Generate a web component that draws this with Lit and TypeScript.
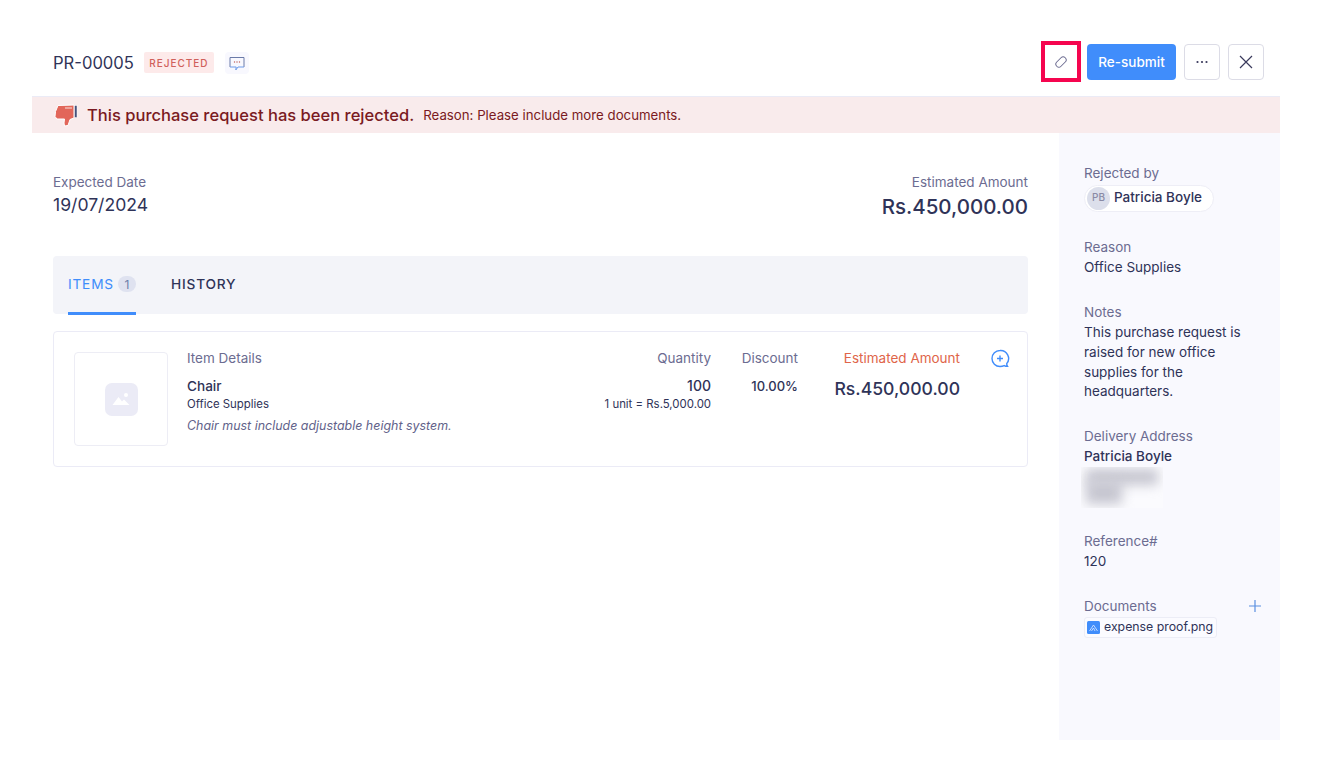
import { LitElement, html, css } from "lit";
import { customElement } from "lit/decorators.js";

@customElement("app-root")
export class AppRoot extends LitElement {
  static styles = css`
    :host { display: block; width: 1320px; height: 772px; background: #fff; font-family: Inter, "Liberation Sans", sans-serif; font-size: 14px; color: #21263c; overflow: hidden; }
    * { box-sizing: border-box; }
    .page { padding: 44px 40px 32px 32px; height: 772px; }
    .panel { height: 696px; display: flex; flex-direction: column; }
    .head { height: 53px; display: flex; align-items: flex-start; justify-content: space-between; padding-left: 21px; border-bottom: 1px solid #ebebf6; flex: none; }
    .title { display: flex; align-items: center; height: 37px; }
    .pr { font-size: 16.6px; font-weight: 400; color: #2f3358; line-height: 36px; }
    .badge { margin-left: 10px; height: 21px; width: 70px; background: #fdeaea; border-radius: 2px; color: #d0605a; font-size: 10px; font-weight: 500; letter-spacing: 1px; display: flex; align-items: center; justify-content: center; }
    .cmt { margin-left: 11px; width: 24px; height: 22px; background: #f8f8fe; border-radius: 4px; display: flex; align-items: center; justify-content: center; }
    .actions { display: flex; align-items: center; gap: 8px; height: 36px; padding-right: 16px; }
    .edit { width: 40px; height: 41px; border: 4px solid #f5054f; display: flex; align-items: center; justify-content: center; margin-right: -2px; margin-top: -1px; background: #fff; }
    .primary { width: 89px; height: 36px; border-radius: 4px; background: #408dfb; color: #fff; font-size: 13.5px; font-weight: 500; display: flex; align-items: center; justify-content: center; }
    .sq { width: 36px; height: 36px; border: 1px solid #dcdce6; border-radius: 4px; background: #fff; display: flex; align-items: center; justify-content: center; }
    .alert { flex: none; height: 36px; background: #f9ebec; display: flex; align-items: center; padding-left: 22px; color: #7a1a22; }
    .alert svg { margin-right: 9px; flex: none; }
    .alert b { font-size: 16.55px; font-weight: 500; line-height: 36px; }
    .alert span { font-size: 13.25px; margin-left: 9px; }
    .body { flex: 1; display: flex; min-height: 0; }
    .main { flex: 1; padding: 40px 31px 0 21px; }
    .aside { width: 221px; background: #f9f9fe; padding: 31px 18px 0 25px; font-size: 13.5px; line-height: 19.6px; }
    .sums { display: flex; justify-content: space-between; height: 83px; }
    .lab { color: #6c6c91; font-size: 13.5px; line-height: 18px; }
    .date { font-size: 17.6px; line-height: 27px; color: #2f3358; }
    .right { text-align: right; }
    .big { font-size: 20.5px; font-weight: 500; line-height: 32px; color: #2f3358; }
    .tabs { height: 58px; width: 975px; background: #f3f4f9; border-radius: 4px; display: flex; padding-left: 15px; gap: 35px; font-size: 13.7px; letter-spacing: .8px; font-weight: 500; }
    .tab { height: 59px; display: flex; align-items: center; gap: 4px; color: #2f3358; padding-bottom: 3px; }
    .tab.on { color: #408dfb; border-bottom: 3px solid #408dfb; font-weight: 400; width: 68px; padding-bottom: 0; }
    .count { width: 18px; height: 16px; border-radius: 8px; background: #dfe2f0; color: #6c7ea8; font-size: 12px; letter-spacing: 0; display: flex; align-items: center; justify-content: center; font-weight: 400; }
    .card { margin-top: 17px; width: 975px; height: 136px; border: 1px solid #ebebf6; border-radius: 4px; padding: 20px 17px 0 20px; display: flex; }
    .thumb { width: 94px; height: 94px; border: 1px solid #ededf5; border-radius: 4px; display: flex; align-items: center; justify-content: center; flex: none; }
    .ph { width: 33px; height: 33px; background: #ebebf6; border-radius: 7px; display: flex; align-items: center; justify-content: center; }
    .details { margin-left: 19px; width: 344px; }
    .th { color: #6c6c91; font-size: 13.5px; line-height: 13px; }
    .name { margin-top: 12px; font-size: 13.6px; font-weight: 500; line-height: 18px; color: #2f3358; }
    .cat { font-size: 11.4px; line-height: 18px; color: #2f3358; }
    .note { margin-top: 4px; font-size: 12.45px; font-style: italic; color: #62628a; line-height: 18px; }
    .qty { width: 184px; text-align: right; flex: none; }
    .v { margin-top: 12px; font-size: 14px; font-weight: 500; line-height: 18px; color: #2f3358; }
    .disc .v { font-size: 13px; }
    .sub { font-size: 11.4px; line-height: 18px; color: #2f3358; }
    .disc { width: 87px; text-align: right; flex: none; }
    .amt { width: 162px; text-align: right; flex: none; }
    .amt .th { color: #e0654a; }
    .big2 { margin-top: 12px; font-size: 17.6px; font-weight: 500; line-height: 24px; color: #2f3358; }
    .plus { margin-left: 30px; margin-top: -3px; flex: none; }
    .f { margin-bottom: 25px; }
    .f.first { margin-bottom: 26px; }
    .f.tight { margin-bottom: 24px; }
    .k { color: #6c6c91; }
    .vv { color: #2f3358; margin-top: 1px; }
    .f.ref .vv { margin-top: 0; }
    .f.ref { margin-bottom: 26px; }
    .chip { display: inline-flex; align-items: center; height: 27px; margin-top: 1px; border-radius: 14px; background: #fff; border: 1px solid #eeeef6; padding-right: 11px; font-weight: 500; font-size: 13.5px; color: #2f3358; }
    .av { width: 23px; height: 23px; border-radius: 50%; background: #dcdfeb; color: #8a8aa5; font-size: 10px; font-weight: 500; display: flex; align-items: center; justify-content: center; margin: 0 4px 0 2px; box-shadow: 0 0 0 1px #fff; }
    .strong { font-weight: 500; color: #2f3358; margin-top: 1px; }
    .blur { width: 82px; height: 41px; margin: 0 0 0 -3px; position: relative; overflow: hidden; background: #fbfbfe; }
    .blur i { position: absolute; background: #c6c6d0; filter: blur(6px); }
    .blur .b1 { left: 5px; top: 2px; width: 72px; height: 16px; }
    .blur .b2 { left: 5px; top: 14px; width: 36px; height: 23px; }
    .dochead { display: flex; justify-content: space-between; align-items: center; width: 177px; }
    .dochead svg { margin-bottom: 1px; }
    .doc { display: inline-flex; align-items: center; gap: 4px; height: 21px; border: 1px solid #ecedf6; border-radius: 3px; padding: 0 3px 0 2px; background: #fbfbff; font-size: 12.3px; color: #2f3358; }
  `;

  render() {
    return html`<div class="page"><div class="panel">
      <div class="head">
        <div class="title">
          <span class="pr">PR-00005</span>
          <span class="badge">REJECTED</span>
          <span class="cmt"><svg width="16" height="16" viewBox="0 0 16 16" fill="none"><path d="M1 12V2.500h14V12" stroke="#6a7aa8" stroke-width="1"/><path d="M1 12h6.200L6.800 15 9 12h6" stroke="#6d9ae8" stroke-width="1"/><circle cx="5.500" cy="7" r=".7" fill="#c0605a"/><circle cx="8" cy="7" r=".7" fill="#c0605a"/><circle cx="10.500" cy="7" r=".7" fill="#c0605a"/></svg></span>
        </div>
        <div class="actions">
          <span class="edit"><svg width="14" height="14" viewBox="0 0 14 14" fill="none"><rect x="1" y="4" width="12" height="6" rx="3" transform="rotate(-45 7 7)" stroke="#6c6c91" stroke-width="1"/></svg></span>
          <span class="primary">Re-submit</span>
          <span class="sq"><svg width="14" height="4" viewBox="0 0 14 4"><circle cx="2.500" cy="2" r="1.100" fill="#3a3a5c"/><circle cx="7" cy="2" r="1.100" fill="#3a3a5c"/><circle cx="11.500" cy="2" r="1.100" fill="#3a3a5c"/></svg></span>
          <span class="sq"><svg width="14" height="14" viewBox="0 0 14 14"><path d="M1 1l12 12M13 1 1 13" stroke="#3a3a5c" stroke-width="1.200"/></svg></span>
        </div>
      </div>
      <div class="alert">
        <svg width="24" height="24" viewBox="0 0 24 24"><path d="M4 2.500 20 2v13l-4 1.500-2 6-3.500.500-.5-3 .5-4H3l-2-2.500.5-5z" fill="#e2665a" stroke="#fff" stroke-width="1"/><rect x="20.500" y="2.500" width="2.500" height="12" fill="#46507a" stroke="#fff" stroke-width=".5"/><path d="M11 5h7" stroke="#f6cfc9" stroke-width="1.200"/></svg>
        <b>This purchase request has been rejected.</b><span>Reason: Please include more documents.</span>
      </div>
      <div class="body">
        <div class="main">
          <div class="sums">
            <div><div class="lab">Expected Date</div><div class="date">19/07/2024</div></div>
            <div class="right"><div class="lab">Estimated Amount</div><div class="big">Rs.450,000.00</div></div>
          </div>
          <div class="tabs">
            <div class="tab on">ITEMS <span class="count">1</span></div>
            <div class="tab">HISTORY</div>
          </div>
          <div class="card">
            <div class="thumb"><div class="ph"><svg width="20" height="20" viewBox="0 0 20 20"><path d="M1.500 16 7.500 8l3.500 4.500 2-2 5.500 5.500z" fill="#fff"/><circle cx="15" cy="6" r="2" fill="#fff"/></svg></div></div>
            <div class="details">
              <div class="th">Item Details</div>
              <div class="name">Chair</div>
              <div class="cat">Office Supplies</div>
              <div class="note">Chair must include adjustable height system.</div>
            </div>
            <div class="qty">
              <div class="th">Quantity</div>
              <div class="v">100</div>
              <div class="sub">1 unit = Rs.5,000.00</div>
            </div>
            <div class="disc">
              <div class="th">Discount</div>
              <div class="v">10.00%</div>
            </div>
            <div class="amt">
              <div class="th">Estimated Amount</div>
              <div class="big2">Rs.450,000.00</div>
            </div>
            <svg class="plus" width="20" height="20" viewBox="0 0 20 20" fill="none"><path d="M10 1.500a8 8 0 1 0 0 16c1.300 0 3-.3 4.200-.9.900.500 2 .8 3.300.8-.5-.7-.8-1.700-.8-2.800A8 8 0 0 0 10 1.500z" stroke="#408dfb" stroke-width="1.400"/><path d="M7 9.500h6M10 6.500v6" stroke="#408dfb" stroke-width="1.400"/></svg>
          </div>
        </div>
        <div class="aside">
          <div class="f first"><div class="k">Rejected by</div>
            <div class="chip"><span class="av">PB</span>Patricia Boyle</div></div>
          <div class="f"><div class="k">Reason</div><div class="vv">Office Supplies</div></div>
          <div class="f"><div class="k">Notes</div><div class="vv">This purchase request is raised for new office supplies for the headquarters.</div></div>
          <div class="f tight"><div class="k">Delivery Address</div><div class="strong">Patricia Boyle</div>
            <div class="blur"><i class="b1"></i><i class="b2"></i></div></div>
          <div class="f ref"><div class="k">Reference#</div><div class="vv">120</div></div>
          <div><div class="dochead"><span class="k">Documents</span><svg width="12" height="12" viewBox="0 0 12 12"><path d="M0 6h12M6 0v12" stroke="#5a8fe0" stroke-width="1.200"/></svg></div>
            <div class="doc"><svg width="13" height="13" viewBox="0 0 13 13"><rect width="13" height="13" rx="1.500" fill="#408dfb"/><path d="M2.500 10 6.500 4l4 6M4.500 10l2-3 1.500 3" stroke="#dfeaff" stroke-width=".8" fill="none"/></svg>expense proof.png</div></div>
        </div>
      </div>
    </div></div>`;
  }
}
